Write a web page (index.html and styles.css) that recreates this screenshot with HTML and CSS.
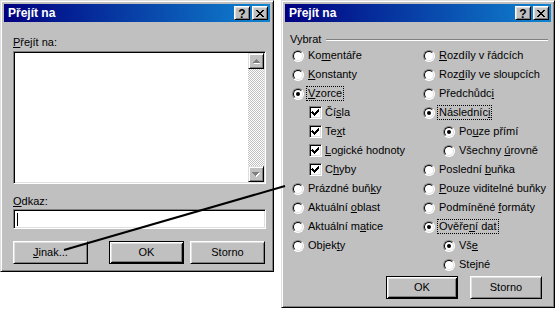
FILE: index.html
```html
<!DOCTYPE html>
<html lang="cs">
<head>
<meta charset="utf-8">
<title>Přejít na</title>
<link rel="stylesheet" href="styles.css">
</head>
<body>
<div class="stage">
  <section class="window win-left">
    <header class="titlebar">
      <span class="title">Přejít na</span>
      <div class="tb-buttons">
        <span class="tb-btn help">?</span>
        <span class="tb-btn close"><svg width="8" height="7" viewBox="0 0 8 7" shape-rendering="crispEdges"><path d="M0 0h2v1h-2z M6 0h2v1h-2z M1 1h2v1h-2z M5 1h2v1h-2z M2 2h4v1h-4z M3 3h2v1h-2z M2 4h4v1h-4z M1 5h2v1h-2z M5 5h2v1h-2z M0 6h2v1h-2z M6 6h2v1h-2z" fill="#000"/></svg></span>
      </div>
    </header>
    <div class="body-left">
      <div class="label"><u>P</u>řejít na:</div>
      <div class="listbox">
        <div class="scrollbar">
          <div class="sb-btn"><svg width="7" height="5" viewBox="0 0 7 5" shape-rendering="crispEdges"><path transform="translate(1 1)" d="M3 0h1v1h1v1h1v1h1v1h-7v-1h1v-1h1v-1h1z" fill="#fff"/><path d="M3 0h1v1h1v1h1v1h1v1h-7v-1h1v-1h1v-1h1z" fill="#808080"/></svg></div>
          <div class="sb-track"></div>
          <div class="sb-btn"><svg width="8" height="5" viewBox="0 0 8 5" shape-rendering="crispEdges"><path transform="translate(1 1)" d="M0 0h7v1h-1v1h-1v1h-1v1h-1v-1h-1v-1h-1v-1h-1z" fill="#fff"/><path d="M0 0h7v1h-1v1h-1v1h-1v1h-1v-1h-1v-1h-1v-1h-1z" fill="#808080"/></svg></div>
        </div>
      </div>
      <div class="label label-odkaz"><u>O</u>dkaz:</div>
      <div class="textfield"><span class="caret"></span></div>
      <div class="btn-row btn-row-left">
        <div class="btn"><span><u>J</u>inak...</span></div>
        <div class="btn default btn-ok">OK</div>
        <div class="btn btn-storno">Storno</div>
      </div>
    </div>
  </section>

  <section class="window win-right">
    <header class="titlebar">
      <span class="title">Přejít na</span>
      <div class="tb-buttons">
        <span class="tb-btn help">?</span>
        <span class="tb-btn close"><svg width="8" height="7" viewBox="0 0 8 7" shape-rendering="crispEdges"><path d="M0 0h2v1h-2z M6 0h2v1h-2z M1 1h2v1h-2z M5 1h2v1h-2z M2 2h4v1h-4z M3 3h2v1h-2z M2 4h4v1h-4z M1 5h2v1h-2z M5 5h2v1h-2z M0 6h2v1h-2z M6 6h2v1h-2z" fill="#000"/></svg></span>
      </div>
    </header>
    <div class="body-right">
      <div class="group-head"><span>Vybrat</span><span class="etched"></span></div>
      <div class="options">
        <div class="col">
          <div class="opt"><span class="radio"></span><span class="txt">Ko<u>m</u>entáře</span></div>
          <div class="opt"><span class="radio"></span><span class="txt"><u>K</u>onstanty</span></div>
          <div class="opt"><span class="radio on"></span><span class="txt focus"><u>V</u>zorce</span></div>
          <div class="opt sub-check"><span class="check"><svg width="13" height="13" viewBox="0 0 13 13" shape-rendering="crispEdges"><path d="M3 5h1v1h1v1h1v-1h1v-1h1v-1h1v-1h1v3h-1v1h-1v1h-1v1h-1v1h-1v-1h-1v-1h-1v-1h-1z" fill="#000"/></svg></span><span class="txt">Čí<u>s</u>la</span></div>
          <div class="opt sub-check"><span class="check"><svg width="13" height="13" viewBox="0 0 13 13" shape-rendering="crispEdges"><path d="M3 5h1v1h1v1h1v-1h1v-1h1v-1h1v-1h1v3h-1v1h-1v1h-1v1h-1v1h-1v-1h-1v-1h-1v-1h-1z" fill="#000"/></svg></span><span class="txt">Te<u>x</u>t</span></div>
          <div class="opt sub-check"><span class="check"><svg width="13" height="13" viewBox="0 0 13 13" shape-rendering="crispEdges"><path d="M3 5h1v1h1v1h1v-1h1v-1h1v-1h1v-1h1v3h-1v1h-1v1h-1v1h-1v1h-1v-1h-1v-1h-1v-1h-1z" fill="#000"/></svg></span><span class="txt"><u>L</u>ogické hodnoty</span></div>
          <div class="opt sub-check"><span class="check"><svg width="13" height="13" viewBox="0 0 13 13" shape-rendering="crispEdges"><path d="M3 5h1v1h1v1h1v-1h1v-1h1v-1h1v-1h1v3h-1v1h-1v1h-1v1h-1v1h-1v-1h-1v-1h-1v-1h-1z" fill="#000"/></svg></span><span class="txt">C<u>h</u>yby</span></div>
          <div class="opt"><span class="radio"></span><span class="txt">Prázdné buň<u>k</u>y</span></div>
          <div class="opt"><span class="radio"></span><span class="txt">Aktuální <u>o</u>blast</span></div>
          <div class="opt"><span class="radio"></span><span class="txt">Aktuální m<u>a</u>tice</span></div>
          <div class="opt"><span class="radio"></span><span class="txt">Objek<u>t</u>y</span></div>
        </div>
        <div class="col">
          <div class="opt"><span class="radio"></span><span class="txt"><u>R</u>ozdíly v řádcích</span></div>
          <div class="opt"><span class="radio"></span><span class="txt">Roz<u>d</u>íly ve sloupcích</span></div>
          <div class="opt"><span class="radio"></span><span class="txt">Předchůdc<u>i</u></span></div>
          <div class="opt"><span class="radio on"></span><span class="txt focus">Následníc<u>i</u></span></div>
          <div class="opt sub-radio"><span class="radio on"></span><span class="txt">Po<u>u</u>ze přímí</span></div>
          <div class="opt sub-radio"><span class="radio"></span><span class="txt">Všechny <u>ú</u>rovně</span></div>
          <div class="opt"><span class="radio"></span><span class="txt">Poslední <u>b</u>uňka</span></div>
          <div class="opt"><span class="radio"></span><span class="txt"><u>P</u>ouze viditelné buňky</span></div>
          <div class="opt"><span class="radio"></span><span class="txt">Podmíněné <u>f</u>ormáty</span></div>
          <div class="opt"><span class="radio on"></span><span class="txt focus">Ověře<u>n</u>í dat</span></div>
          <div class="opt sub-radio"><span class="radio on"></span><span class="txt">Vš<u>e</u></span></div>
          <div class="opt sub-radio"><span class="radio"></span><span class="txt">Ste<u>j</u>né</span></div>
        </div>
      </div>
      <div class="btn-row btn-row-right">
        <div class="btn default btn-r">OK</div>
        <div class="btn btn-r">Storno</div>
      </div>
    </div>
  </section>

  <svg class="connector" width="558" height="311" viewBox="0 0 558 311">
    <line x1="64" y1="250" x2="285" y2="186" stroke="#000" stroke-width="2"/>
  </svg>
</div>
</body>
</html>
```

FILE: styles.css
```css
html, body {
  margin: 0;
  padding: 0;
  background: #fff;
}

body {
  font-family: "Liberation Sans", Arial, sans-serif;
  font-size: 11px;
  line-height: 13px;
  color: #000;
}

.stage {
  position: relative;
  width: 558px;
  height: 311px;
  display: flex;
  align-items: flex-start;
  gap: 7px;
}

.window {
  box-sizing: border-box;
  width: 274px;
  background: #c0c0c0;
  border: 1px solid;
  border-color: #dfdfdf #000 #000 #dfdfdf;
  box-shadow: inset 1px 1px #fff, inset -1px -1px #808080;
  padding: 3px;
  display: flex;
  flex-direction: column;
}

.win-left { height: 272px; }
.win-right { height: 308px; }

.titlebar {
  height: 18px;
  flex: none;
  display: flex;
  align-items: center;
  justify-content: space-between;
  background: linear-gradient(to right, #000080, #1084d0);
  padding: 0 2px 0 4px;
}

.title {
  color: #fff;
  font-weight: bold;
  font-size: 12px;
  line-height: 14px;
}

.tb-buttons {
  display: flex;
  gap: 2px;
}

.tb-btn {
  box-sizing: border-box;
  width: 16px;
  height: 14px;
  background: #c0c0c0;
  border: 1px solid;
  border-color: #fff #000 #000 #fff;
  box-shadow: inset 1px 1px #dfdfdf, inset -1px -1px #808080;
  display: flex;
  align-items: center;
  justify-content: center;
}

.tb-btn.help {
  font-weight: bold;
  font-size: 12px;
  line-height: 12px;
  padding-top: 1px;
}

.tb-btn.close svg { display: block; margin-top: 1px; }

/* left dialog */
.body-left {
  padding: 14px 0 0 9px;
  display: flex;
  flex-direction: column;
}

.label { height: 13px; }

.listbox {
  box-sizing: border-box;
  margin-top: 2px;
  width: 253px;
  height: 133px;
  background: #fff;
  border: 1px solid;
  border-color: #808080 #fff #fff #808080;
  box-shadow: inset 1px 1px #000, inset -1px -1px #dfdfdf;
  padding: 1px;
  display: flex;
  justify-content: flex-end;
}

.scrollbar {
  width: 16px;
  display: flex;
  flex-direction: column;
}

.sb-btn {
  box-sizing: border-box;
  width: 16px;
  height: 16px;
  flex: none;
  background: #c0c0c0;
  border: 1px solid;
  border-color: #dfdfdf #000 #000 #dfdfdf;
  box-shadow: inset 1px 1px #fff, inset -1px -1px #808080;
  display: flex;
  align-items: center;
  justify-content: center;
}

.sb-btn svg { display: block; }

.sb-track {
  flex: 1;
  background-image: repeating-conic-gradient(#c0c0c0 0 25%, #fff 0 50%);
  background-size: 2px 2px;
}

.label-odkaz { margin-top: 11px; }

.textfield {
  box-sizing: border-box;
  margin-top: 1px;
  width: 253px;
  height: 20px;
  background: #fff;
  border: 1px solid;
  border-color: #808080 #fff #fff #808080;
  box-shadow: inset 1px 1px #000, inset -1px -1px #dfdfdf;
  padding: 3px 0 0 3px;
}

.caret {
  display: block;
  width: 1px;
  height: 13px;
  background: #000;
}

.btn-row { display: flex; }

.btn-row-left { margin-top: 12px; }

.btn {
  box-sizing: border-box;
  width: 75px;
  height: 23px;
  background: #c0c0c0;
  border: 1px solid;
  border-color: #fff #000 #000 #fff;
  box-shadow: inset 1px 1px #dfdfdf, inset -1px -1px #808080;
  display: flex;
  align-items: center;
  justify-content: center;
}

.btn.default {
  border-color: #000;
  box-shadow: inset 1px 1px #fff, inset -1px -1px #000, inset 2px 2px #dfdfdf, inset -2px -2px #808080;
}

.btn-ok { margin-left: 21px; }
.btn-storno { margin-left: 6px; }

/* right dialog */
.body-right {
  padding: 11px 3px 0 0;
  display: flex;
  flex-direction: column;
}

.group-head {
  height: 13px;
  display: flex;
  align-items: center;
  padding-left: 5px;
}

.etched {
  flex: 1;
  margin-left: 5px;
  height: 0;
  border-top: 1px solid #808080;
  border-bottom: 1px solid #fff;
}

.options {
  display: grid;
  grid-template-columns: 131px 1fr;
  padding-left: 7px;
}

.col {
  display: flex;
  flex-direction: column;
}

.opt {
  height: 19px;
  display: flex;
  align-items: center;
  white-space: nowrap;
}

.opt.sub-check { padding-left: 17px; }
.opt.sub-radio { padding-left: 20px; }

.radio {
  box-sizing: border-box;
  position: relative;
  flex: none;
  width: 12px;
  height: 12px;
  border-radius: 50%;
  background: #fff;
  border: 1px solid;
  border-color: #808080 #fff #fff #808080;
  margin-right: 4px;
}

.radio::before {
  content: "";
  position: absolute;
  inset: 0;
  box-sizing: border-box;
  border-radius: 50%;
  border: 1px solid;
  border-color: #000 #dfdfdf #dfdfdf #000;
}

.radio.on::after {
  content: "";
  position: absolute;
  left: 3px;
  top: 3px;
  width: 4px;
  height: 4px;
  border-radius: 50%;
  background: #000;
}

.check {
  box-sizing: border-box;
  flex: none;
  width: 13px;
  height: 13px;
  background: #fff;
  border: 1px solid;
  border-color: #808080 #fff #fff #808080;
  box-shadow: inset 1px 1px #000, inset -1px -1px #dfdfdf;
  margin-right: 3px;
  position: relative;
}

.check svg {
  position: absolute;
  left: -1px;
  top: -1px;
}

.txt.focus {
  border: 1px dotted #000;
  padding: 0 1px;
  margin-left: -2px;
}

.btn-row-right {
  margin-top: 2px;
  justify-content: flex-end;
  padding-right: 6px;
  gap: 12px;
}

.btn-r { width: 72px; }

.connector {
  position: absolute;
  left: 0;
  top: 0;
  pointer-events: none;
}
```
